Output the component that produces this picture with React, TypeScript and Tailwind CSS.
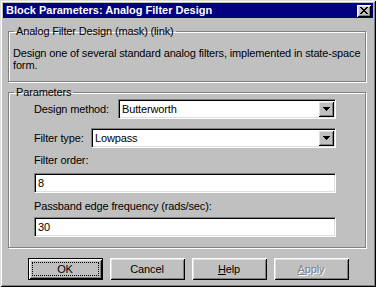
import React from "react";

const raised =
  "shadow-[inset_1px_1px_0_#ffffff,inset_-1px_-1px_0_#000000,inset_2px_2px_0_#dfdfdf,inset_-2px_-2px_0_#808080]";
const sunken =
  "border border-t-[#808080] border-l-[#808080] border-r-white border-b-white shadow-[inset_1px_1px_0_#000000,inset_-1px_-1px_0_#dfdfdf]";

function CloseGlyph() {
  const rows = [
    "XX....XX",
    ".XX..XX.",
    "..XXXX..",
    "...XX...",
    "..XXXX..",
    ".XX..XX.",
    "XX....XX",
  ];
  const rects: React.ReactElement[] = [];
  rows.forEach((r, y) =>
    r.split("").forEach((c, x) => {
      if (c === "X") rects.push(<rect key={`${x}-${y}`} x={x} y={y} width={1} height={1} fill="#000" />);
    })
  );
  return (
    <svg width="8" height="7" viewBox="0 0 8 7" shapeRendering="crispEdges">
      {rects}
    </svg>
  );
}

function Arrow() {
  return (
    <svg width="7" height="4" viewBox="0 0 7 4" shapeRendering="crispEdges">
      <rect x="0" y="0" width="7" height="1" fill="#000" />
      <rect x="1" y="1" width="5" height="1" fill="#000" />
      <rect x="2" y="2" width="3" height="1" fill="#000" />
      <rect x="3" y="3" width="1" height="1" fill="#000" />
    </svg>
  );
}

function Select({ value }: { value: string }) {
  return (
    <div className={`flex-1 h-[20px] bg-white flex items-center p-[1px] ${sunken}`}>
      <span className="flex-1 pl-[2px] leading-[13px]">{value}</span>
      <div className={`w-[16px] h-[16px] bg-[#c0c0c0] flex items-center justify-center ${raised}`}>
        <Arrow />
      </div>
    </div>
  );
}

function TextInput({ value }: { value: string }) {
  return (
    <div className={`w-full h-[20px] bg-white flex items-center pl-[2px] ${sunken}`}>
      <span className="leading-[13px] pl-[1px]">{value}</span>
    </div>
  );
}

function Button({ children, def, disabled }: { children: React.ReactNode; def?: boolean; disabled?: boolean }) {
  if (def) {
    return (
      <div className="w-[75px] h-[22px] border border-black">
        <div className={`w-full h-full flex items-center justify-center p-[3px] ${raised}`}>
          <div className="w-full h-full border border-dotted border-black flex items-center justify-center">
            {children}
          </div>
        </div>
      </div>
    );
  }
  return (
    <div
      className={`w-[75px] h-[22px] flex items-center justify-center ${raised} ${
        disabled ? "text-[#808080] [text-shadow:1px_1px_0_#ffffff]" : ""
      }`}
    >
      {children}
    </div>
  );
}

export default function App() {
  return (
    <div
      className="w-[376px] h-[287px] bg-[#c0c0c0] p-[3px] flex flex-col text-black text-[11px] leading-[13px] tracking-[-0.15px] whitespace-nowrap shadow-[inset_1px_1px_0_#dfdfdf,inset_-1px_-1px_0_#000000,inset_2px_2px_0_#ffffff,inset_-2px_-2px_0_#808080]"
      style={{ fontFamily: '"Liberation Sans", Arial, sans-serif' }}
    >
      <div className="h-[15px] bg-[#000080] flex items-center justify-between pl-[3px] pr-[2px]">
        <span className="text-white font-bold text-[11px] leading-[13px] tracking-[0px]">
          Block Parameters: Analog Filter Design
        </span>
        <div className={`w-[14px] h-[12px] bg-[#c0c0c0] flex items-center justify-center ${raised}`}>
          <CloseGlyph />
        </div>
      </div>

      <fieldset className="mt-[7px] ml-[5px] w-[358px] border border-[#808080] shadow-[inset_1px_1px_0_#ffffff,1px_1px_0_#ffffff] pl-[4px] pt-[9px] pb-[10px]">
        <legend className="ml-[1px] px-[2px] leading-[13px]">Analog Filter Design (mask) (link)</legend>
        <p className="leading-[12px]">
          Design one of several standard analog filters, implemented in state-space
          <br />
          form.
        </p>
      </fieldset>

      <fieldset className="mt-[4px] ml-[5px] w-[358px] border border-[#808080] shadow-[inset_1px_1px_0_#ffffff,1px_1px_0_#ffffff] pl-[25px] pb-[10px]">
        <legend className="-ml-[20px] px-[2px] leading-[13px]">Parameters</legend>
        <div className="w-[302px] flex flex-col">
          <div className="flex items-center">
            <span className="w-[84px]">Design method:</span>
            <Select value="Butterworth" />
          </div>
          <div className="flex items-center mt-[9px]">
            <span className="w-[57px]">Filter type:</span>
            <Select value="Lowpass" />
          </div>
          <span className="mt-[6px]">Filter order:</span>
          <div className="mt-[6px]">
            <TextInput value="8" />
          </div>
          <span className="mt-[7px]">Passband edge frequency (rads/sec):</span>
          <div className="mt-[4px]">
            <TextInput value="30" />
          </div>
        </div>
      </fieldset>

      <div className="mt-[10px] flex justify-center gap-[7px]">
        <Button def>OK</Button>
        <Button>Cancel</Button>
        <Button>
          <span>
            <span className="underline">H</span>elp
          </span>
        </Button>
        <Button disabled>
          <span>
            <span className="underline">A</span>pply
          </span>
        </Button>
      </div>
    </div>
  );
}
